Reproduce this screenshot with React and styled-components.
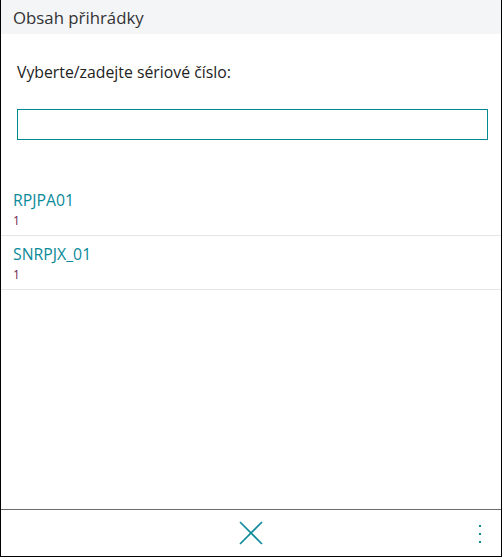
import React from "react";
import styled, { createGlobalStyle } from "styled-components";

const Global = createGlobalStyle`
  html, body { margin: 0; padding: 0; background: #fff; }
  * { box-sizing: border-box; }
  body { font-family: "Open Sans", "Noto Sans", sans-serif; }
`;

const Frame = styled.div`
  width: 502px;
  height: 557px;
  display: flex;
  flex-direction: column;
  border-left: 1px solid #000;
  border-right: 1px solid #000;
  border-bottom: 1px solid #000;
  background: #fff;
`;

const Header = styled.div`
  height: 34px;
  flex: none;
  background: #f4f5f7;
  padding-left: 12px;
  display: flex;
  align-items: center;
  font-size: 16.8px;
  color: #333;
`;

const Content = styled.div`
  flex: 1;
  display: flex;
  flex-direction: column;
`;

const Form = styled.div`
  padding: 28px 13px 0 16px;
  display: flex;
  flex-direction: column;
`;

const Label = styled.label`
  font-size: 15.8px;
  line-height: 20px;
  color: #222;
`;

const InputBox = styled.div`
  margin-top: 27px;
  height: 31px;
  border: 1px solid #00898f;
  display: flex;
`;

const Input = styled.input`
  flex: 1;
  border: none;
  outline: none;
  font: inherit;
  padding: 0 6px;
  background: transparent;
`;

const List = styled.div`
  margin-top: 42px;
  display: flex;
  flex-direction: column;
`;

const Item = styled.div`
  padding: 7px 12px 6px;
  border-bottom: 1px solid #e6e6e6;
  display: flex;
  flex-direction: column;
`;

const Title = styled.div`
  font-size: 15.8px;
  line-height: 22px;
  color: #0a8a9a;
`;

const Sub = styled.div`
  font-size: 12px;
  line-height: 17px;
  padding-top: 1px;
  color: #6e1d50;
`;

const Footer = styled.div`
  height: 47px;
  flex: none;
  border-top: 1px solid #6b6b6b;
  position: relative;
  display: flex;
  align-items: center;
  justify-content: center;
`;

const IconButton = styled.button`
  background: none;
  border: none;
  padding: 0;
  display: flex;
  cursor: pointer;
`;

const MoreButton = styled(IconButton)`
  position: absolute;
  right: 19px;
  top: 14px;
`;

const items = [
  { title: "RPJPA01", sub: "1" },
  { title: "SNRPJX_01", sub: "1" },
];

export default function App() {
  return (
    <>
      <Global />
      <Frame>
        <Header>Obsah přihrádky</Header>
        <Content>
          <Form>
            <Label>Vyberte/zadejte sériové číslo:</Label>
            <InputBox>
              <Input />
            </InputBox>
          </Form>
          <List>
            {items.map((it) => (
              <Item key={it.title}>
                <Title>{it.title}</Title>
                <Sub>{it.sub}</Sub>
              </Item>
            ))}
          </List>
        </Content>
        <Footer>
          <IconButton aria-label="close">
            <svg width="24" height="24" viewBox="0 0 24 24">
              <path d="M1 1 L23 23 M23 1 L1 23" stroke="#0a8a9a" strokeWidth="1.6" fill="none" />
            </svg>
          </IconButton>
          <MoreButton aria-label="more">
            <svg width="4" height="20" viewBox="0 0 4 20">
              <rect x="1" y="1" width="2" height="2" fill="#0a8a9a" />
              <rect x="1" y="9" width="2" height="2" fill="#0a8a9a" />
              <rect x="1" y="17" width="2" height="2" fill="#0a8a9a" />
            </svg>
          </MoreButton>
        </Footer>
      </Frame>
    </>
  );
}
